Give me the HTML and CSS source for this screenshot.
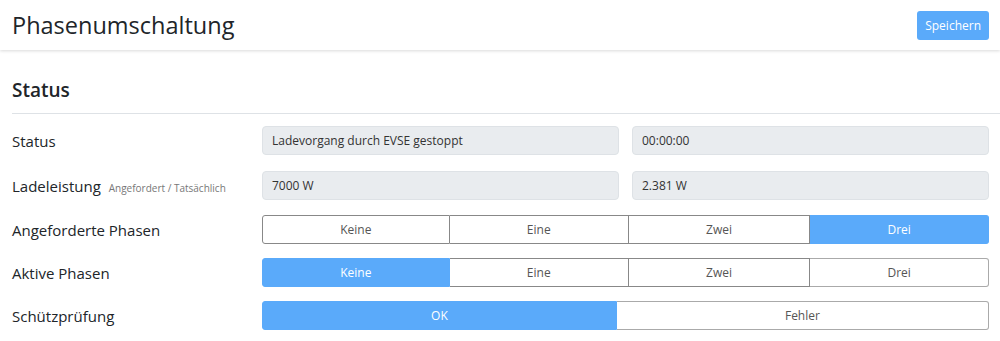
FILE: index.html
```html
<!DOCTYPE html>
<html lang="de">
<head>
    <meta charset="UTF-8">
    <meta name="viewport" content="width=device-width, initial-scale=1.0">
    <title>Phasenumschaltung</title>
    <link rel="stylesheet" href="styles.css">
</head>
<body>
    <header class="topbar">
        <h1>Phasenumschaltung</h1>
        <button class="btn-save">Speichern</button>
    </header>

    <section class="panel">
        <h2>Status</h2>

        <div class="form-row field-row first">
            <label>Status</label>
            <div class="pair">
                <input class="readonly" type="text" value="Ladevorgang durch EVSE gestoppt" readonly>
                <input class="readonly" type="text" value="00:00:00" readonly>
            </div>
        </div>

        <div class="form-row field-row">
            <label>Ladeleistung <small>Angefordert / Tatsächlich</small></label>
            <div class="pair">
                <input class="readonly" type="text" value="7000 W" readonly>
                <input class="readonly" type="text" value="2.381 W" readonly>
            </div>
        </div>

        <div class="form-row">
            <label>Angeforderte Phasen</label>
            <div class="btn-group">
                <button>Keine</button>
                <button>Eine</button>
                <button>Zwei</button>
                <button class="active">Drei</button>
            </div>
        </div>

        <div class="form-row">
            <label>Aktive Phasen</label>
            <div class="btn-group">
                <button class="active">Keine</button>
                <button>Eine</button>
                <button>Zwei</button>
                <button>Drei</button>
            </div>
        </div>

        <div class="form-row">
            <label>Schützprüfung</label>
            <div class="btn-group">
                <button class="active">OK</button>
                <button>Fehler</button>
            </div>
        </div>
    </section>
</body>
</html>
```

FILE: styles.css
```css
body {
    margin: 0;
    font-family: "Open Sans", "Noto Sans", Arial, sans-serif;
    color: #212529;
    background: #fff;
}
.topbar {
    height: 50px;
    display: flex;
    align-items: center;
    justify-content: space-between;
    padding: 0 11px 0 12px;
    background: #fff;
    box-shadow: 0 1px 3px rgba(0, 0, 0, 0.15);
}
.topbar h1 {
    margin: 0;
    font-size: 23.5px;
    font-weight: 400;
}
.btn-save {
    height: 29px;
    padding: 0 8px;
    border: none;
    border-radius: 3px;
    background-color: #5aaafa;
    color: #fff;
    font-family: inherit;
    font-size: 12px;
    cursor: pointer;
}
.panel {
    padding-top: 27px;
}
.panel h2 {
    margin: 0 0 12px 12px;
    padding-bottom: 10px;
    border-bottom: 1px solid #dee2e6;
    font-size: 19px;
    font-weight: 600;
}
.form-row {
    display: grid;
    grid-template-columns: 250px 727px;
    align-items: center;
    padding-left: 12px;
    margin-bottom: 14px;
}
.field-row {
    margin-bottom: 15px;
}
.field-row.first {
    margin-bottom: 16px;
}
.form-row label {
    font-size: 15px;
}
.form-row small {
    margin-left: 4px;
    font-size: 10px;
    color: #777;
}
.pair {
    display: grid;
    grid-template-columns: 1fr 1fr;
    gap: 13px;
}
.readonly {
    height: 29px;
    box-sizing: border-box;
    padding: 0 9px;
    border: 1px solid #dee2e6;
    border-radius: 4px;
    background-color: #e9ecef;
    color: #333;
    font-family: inherit;
    font-size: 12px;
    min-width: 0;
}
.btn-group {
    display: flex;
    height: 29px;
}
.btn-group button {
    flex: 1 1 auto;
    padding: 0 12px;
    border: 1px solid #888;
    border-left-width: 0;
    background: #fff;
    color: #555;
    font-family: inherit;
    font-size: 12px;
    cursor: pointer;
}
.btn-group button:first-child {
    border-left-width: 1px;
    border-radius: 3px 0 0 3px;
}
.btn-group button:last-child {
    border-radius: 0 3px 3px 0;
    border-color: #aaa;
}
.btn-group button.active {
    background-color: #5aaafa;
    border-color: #5aaafa;
    color: #fff;
}
```
